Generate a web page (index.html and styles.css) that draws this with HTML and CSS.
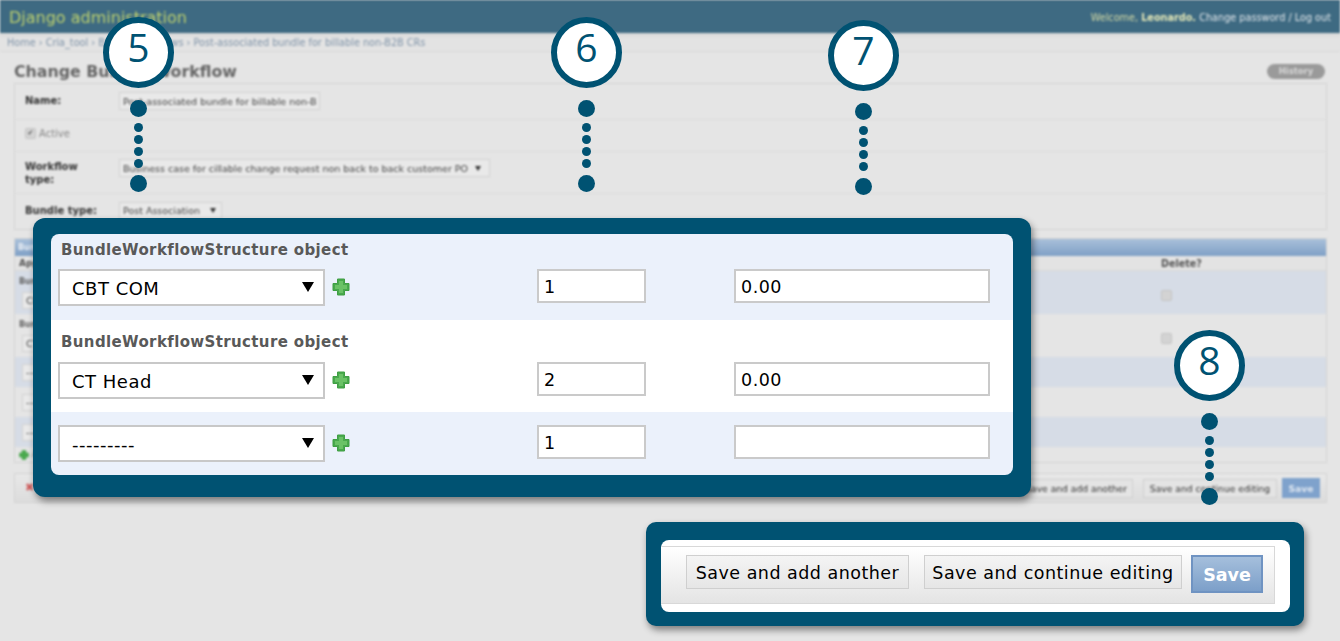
FILE: index.html
```html
<!DOCTYPE html>
<html lang="en">
<head>
<meta charset="utf-8">
<title>Change Bundle Workflow</title>
<link rel="stylesheet" href="styles.css">
</head>
<body>
<div class="page">
  <header class="topbar">
    <div class="brand">Django administration</div>
    <div class="user">Welcome, <strong>Leonardo.</strong> <span class="user-links">Change password / Log out</span></div>
  </header>
  <nav class="crumbs">Home › Cria_tool › Bundle workflows › Post-associated bundle for billable non-B2B CRs</nav>
  <main class="content">
    <div class="title-row">
      <h1>Change Bundle Workflow</h1>
      <span class="history">History</span>
    </div>
    <section class="panel form-panel">
      <div class="frow fr-name"><label class="flabel">Name:</label><span class="ctl ctl-name">Post-associated bundle for billable non-B</span></div>
      <div class="frow fr-active"><span class="check checked">✔</span><span class="active-label">Active</span></div>
      <div class="frow fr-type"><label class="flabel">Workflow type:</label><span class="ctl ctl-type">Business case for cillable change request non back to back customer PO<i class="mini-arrow"></i></span></div>
      <div class="frow fr-bundle"><label class="flabel">Bundle type:</label><span class="ctl ctl-bundle">Post Association<i class="mini-arrow"></i></span></div>
    </section>
    <section class="panel inline-panel">
      <div class="inline-title">Bundle workflow structures</div>
      <div class="irow ihead"><span>Approver</span><span class="del-head">Delete?</span></div>
      <div class="irow i-tall alt"><div class="icell"><b>BundleWorkflowStructure object</b><span class="ctl ctl-small">CBT COM</span></div><span class="check check-del"></span></div>
      <div class="irow i-tall"><div class="icell"><b>BundleWorkflowStructure object</b><span class="ctl ctl-small">CT Head</span></div><span class="check check-del"></span></div>
      <div class="irow i-short alt"><span class="ctl ctl-small">---</span></div>
      <div class="irow i-short"><span class="ctl ctl-small">---</span></div>
      <div class="irow i-short alt"><span class="ctl ctl-small">---</span></div>
      <div class="irow i-add"><svg class="plus-mini" viewBox="0 0 18 18"><path class="plus-shape" d="M5.5 1h7v4.5H17v7h-4.5V17h-7v-4.5H1v-7h4.5z"/></svg><span>Add another</span></div>
    </section>
    <section class="panel submit-panel">
      <span class="del-x">✖</span>
      <span class="bgbtn">Save and add another</span>
      <span class="bgbtn bgbtn-cont">Save and continue editing</span>
      <span class="bgbtn bgbtn-save">Save</span>
    </section>
  </main>
</div>

<div class="callout c5"><div class="num">5</div><div class="dot big"></div><div class="dots"><i></i><i></i><i></i><i></i></div><div class="dot big"></div></div>
<div class="callout c6"><div class="num">6</div><div class="dot big"></div><div class="dots"><i></i><i></i><i></i><i></i></div><div class="dot big"></div></div>
<div class="callout c7"><div class="num">7</div><div class="dot big"></div><div class="dots"><i></i><i></i><i></i><i></i></div><div class="dot big"></div></div>
<div class="callout c8"><div class="num">8</div><div class="dot big"></div><div class="dots"><i></i><i></i><i></i><i></i></div><div class="dot big"></div></div>

<section class="modal modal-table">
  <div class="modal-inner">
    <div class="mrow m1">
      <h3>BundleWorkflowStructure object</h3>
      <div class="fields">
        <div class="sel"><span>CBT COM</span><svg class="arrow" viewBox="0 0 12 12"><path d="M0 1h12L6 11z"/></svg></div>
        <svg class="plus" viewBox="0 0 18 18"><path class="plus-shape" d="M5.5 1h7v4.5H17v7h-4.5V17h-7v-4.5H1v-7h4.5z"/><path class="plus-core" d="M7 3h4v4h4v4h-4v4H7v-4H3V7h4z"/></svg>
        <input class="num-in" value="1"><input class="amt-in" value="0.00">
      </div>
    </div>
    <div class="mrow m2">
      <h3>BundleWorkflowStructure object</h3>
      <div class="fields">
        <div class="sel"><span>CT Head</span><svg class="arrow" viewBox="0 0 12 12"><path d="M0 1h12L6 11z"/></svg></div>
        <svg class="plus" viewBox="0 0 18 18"><path class="plus-shape" d="M5.5 1h7v4.5H17v7h-4.5V17h-7v-4.5H1v-7h4.5z"/><path class="plus-core" d="M7 3h4v4h4v4h-4v4H7v-4H3V7h4z"/></svg>
        <input class="num-in" value="2"><input class="amt-in" value="0.00">
      </div>
    </div>
    <div class="mrow m3">
      <div class="fields">
        <div class="sel"><span>---------</span><svg class="arrow" viewBox="0 0 12 12"><path d="M0 1h12L6 11z"/></svg></div>
        <svg class="plus" viewBox="0 0 18 18"><path class="plus-shape" d="M5.5 1h7v4.5H17v7h-4.5V17h-7v-4.5H1v-7h4.5z"/><path class="plus-core" d="M7 3h4v4h4v4h-4v4H7v-4H3V7h4z"/></svg>
        <input class="num-in" value="1"><input class="amt-in" value="">
      </div>
    </div>
  </div>
</section>

<section class="modal modal-save">
  <div class="save-inner">
    <div class="save-row">
      <button class="sbtn sb-add">Save and add another</button>
      <button class="sbtn sb-cont">Save and continue editing</button>
      <button class="sbtn-primary">Save</button>
    </div>
  </div>
</section>
</body>
</html>
```
FILE: styles.css
```css
* { box-sizing: border-box; }
html, body { margin: 0; padding: 0; }
body {
  width: 1340px; height: 641px; overflow: hidden; position: relative;
  background: #e5e5e5; font-family: "DejaVu Sans", Verdana, sans-serif; color: #333;
}
.page { filter: blur(.8px); height: 641px; }
.topbar {
  height: 33px; background: #3e6a82; border-top: 1px solid #2f5a72;
  display: flex; justify-content: space-between; align-items: center; padding: 0 9px;
}
.brand { color: #bcd06e; font-size: 16px; }
.user { color: #d5dba6; font-size: 9.7px; }
.user strong { color: #e6e9b8; }
.user-links { color: #e3e8ec; }
.crumbs {
  height: 19px; padding: 0 7px; display: flex; align-items: center;
  font-size: 9.7px; color: #7f93a8; border-bottom: 1px solid #d9d9d9;
  background: linear-gradient(#d8d8d8, #e3e3e3 30%);
}
.content { padding: 0 13px 0 14px; }
.title-row { height: 31px; display: flex; justify-content: space-between; align-items: center; padding-top: 7px; }
h1 { margin: 0; font-size: 15.8px; font-weight: bold; color: #666; }
.history {
  width: 58px; height: 15px; border-radius: 8px; background: #9a9a9a; color: #d8d8d8;
  font-size: 8.5px; font-weight: bold; display: flex; align-items: center; justify-content: center;
  margin-right: 2px;
}
.panel { border: 1px solid #d4d4d4; }
.form-panel { height: 147px; }
.frow { display: flex; padding-left: 10px; border-bottom: 1px solid #dddddd; align-items: center; }
.frow:last-child { border-bottom: 0; }
.fr-name { height: 36px; }
.fr-active { height: 32px; padding-bottom: 4px; }
.fr-type { height: 42px; }
.fr-bundle { height: 36px; }
.flabel { width: 94px; font-size: 10px; font-weight: bold; color: #333; line-height: 13px; padding-right: 12px; }
.fr-name .flabel { margin-top: -2px; }
.fr-bundle .flabel { margin-top: -3px; }
.ctl {
  background: #e9e9e9; border: 1px solid #d2d2d2; font-size: 9.5px; color: #444;
  display: flex; align-items: center; justify-content: space-between; padding: 0 3px; white-space: nowrap; overflow: hidden;
}
.ctl-name { width: 201px; height: 18px; margin-top: -1px; }
.ctl-type { width: 371px; height: 18px; margin-top: -9px; padding-right: 8px; }
.ctl-bundle { width: 103px; height: 17px; margin-top: -4px; padding-right: 5px; }
.mini-arrow { border: 3px solid transparent; border-top: 5px solid #333; border-bottom: 0; }
.check {
  width: 11px; height: 11px; background: #d3d3d3; border: 1px solid #c4c4c4; border-radius: 2px;
  font-size: 7px; line-height: 9px; color: #555; text-align: center; display: block;
}
.check-del { margin-top: 5px; }
.active-label { font-size: 10px; color: #888; margin-left: 3px; }
.inline-panel { margin-top: 8px; height: 225px; }
.inline-title {
  height: 17px; background: linear-gradient(#a9c0da, #7fa0c6); color: #e8edf3;
  font-size: 8px; font-weight: bold; padding: 4px 3px; 
}
.irow { display: grid; grid-template-columns: 1fr 165px; align-items: center; padding-left: 4px; }
.ihead { height: 15px; font-size: 9px; font-weight: bold; color: #555; background: #e3e3e3; border-bottom: 1px solid #d8d8d8; }
.del-head { font-size: 9.6px; }
.i-tall { height: 43px; }
.i-short { height: 30px; }
.alt { background: #d6dce6; }
.i-add { height: 15px; display: flex; gap: 3px; font-size: 8px; color: #7a7a7a; }
.icell { display: flex; flex-direction: column; gap: 6px; font-size: 8px; color: #666; }
.ctl-small { width: 180px; height: 17px; margin-left: 3px; }
.plus-mini { width: 10px; height: 10px; }
.submit-panel {
  margin-top: 10px; height: 30px; display: flex; align-items: center; padding: 0 6px 0 10px;
  background: linear-gradient(#e8e8e8, #dcdcdc);
}
.del-x { color: #cf5b5b; font-size: 11px; margin-right: auto; margin-top: -2px; }
.bgbtn {
  height: 19px; padding: 0 5px; background: #e4e4e4; border: 1px solid #cfcfcf;
  font-size: 9.2px; color: #333; display: flex; align-items: center; white-space: nowrap;
}
.bgbtn-cont { width: 134px; margin-left: 10px; justify-content: center; padding: 0; }
.bgbtn-save { background: #7fa2cc; color: #dfe7f1; border-color: #7fa2cc; font-weight: bold; width: 38px; height: 20px; justify-content: center; margin-left: 5px; }

/* annotation callouts */
.callout { position: absolute; display: flex; flex-direction: column; align-items: center; gap: 6px; width: 71px; }
.c5 { left: 103px; top: 17px; }
.c6 { left: 551px; top: 17px; }
.c7 { left: 828px; top: 20px; }
.c8 { left: 1174px; top: 330px; }
.num {
  width: 71px; height: 71px; border-radius: 50%; background: #fff; border: 6px solid #005272; flex: none;
  color: #005272; font-family: "Open Sans", sans-serif; font-size: 39px; line-height: 48px; text-align: center;
  margin-bottom: 6px;
}
.dot.big { width: 17px; height: 17px; border-radius: 50%; background: #005272; }
.dots { display: flex; flex-direction: column; gap: 3px; margin-bottom: 1px; }
.dots i { width: 9px; height: 9px; border-radius: 50%; background: #005272; display: block; }

/* floating enlargements */
.modal { position: absolute; background: #005272; box-shadow: 2px 4px 7px rgba(0,0,0,.45); }
.modal-table { left: 33px; top: 218px; width: 998px; height: 279px; border-radius: 12px; padding: 16px 18px 22px; }
.modal-inner { height: 241px; border-radius: 8px; overflow: hidden; background: #ebf1fb; }
.mrow { padding-left: 7px; }
.m1 { height: 86px; padding-top: 7px; }
.m1 h3 { margin-bottom: 9px; }
.m2 { height: 92px; padding-top: 13px; background: #fff; }
.m3 { height: 63px; padding-top: 13px; }
h3 { margin: 0 0 10px 3px; font-size: 15px; line-height: 19px; font-weight: bold; color: #595959; letter-spacing: .37px; }
.fields { display: flex; align-items: flex-start; }
.sel {
  width: 267px; height: 37px; border: 2px solid #c8c8c8; background: #fff; color: #000;
  font-size: 18px; letter-spacing: .5px; display: flex; align-items: center; justify-content: space-between; padding: 1px 9px 0 12px;
}
.arrow { width: 12px; height: 12px; margin-top: -3px; }
.arrow path { fill: #000; }
.plus { width: 18px; height: 18px; margin: 9px 0 0 7px; }
.plus-shape { fill: #49a94d; stroke: #3f9f43; stroke-width: 1; stroke-linejoin: round; }
.plus-core { fill: #6ac266; }
input {
  height: 34px; border: 2px solid #cacaca; background: #fff; color: #000; border-radius: 0; outline: 0;
  font-family: "DejaVu Sans", sans-serif; font-size: 17.5px; letter-spacing: .5px; padding: 1px 5px 0;
}
.num-in { width: 109px; margin-left: 187px; }
.amt-in { width: 256px; margin-left: 88px; }

.modal-save { left: 646px; top: 522px; width: 658px; height: 104px; border-radius: 10px; padding: 18px 14px 14px 15px; }
.save-inner { height: 72px; background: #fff; border-radius: 8px; padding: 6px 15px 0 0; }
.save-row {
  height: 58px; border: 1px solid #d8d8d8; border-left: 0; background: linear-gradient(#fff, #e4e4e4);
  display: flex; align-items: flex-start; padding: 8px 0 0 25px;
}
.sbtn {
  height: 34px; border: 1px solid #cfcfcf; background: linear-gradient(#f4f4f4, #e6e6e6); color: #000; padding: 2px 0 0;
  font-family: "DejaVu Sans", sans-serif; font-size: 17.5px; letter-spacing: .48px; border-radius: 0;
}
.sb-add { width: 223px; }
.sb-cont { width: 258px; margin-left: 15px; }
.sbtn-primary {
  width: 72px; height: 38px; margin-left: 9px; border: 2px solid #6f93c2; border-radius: 0; padding: 2px 0 0;
  background: linear-gradient(#a5bfdc, #7c9fc9); color: #fff;
  font-family: "DejaVu Sans", sans-serif; font-size: 17.5px; font-weight: bold;
}
```
